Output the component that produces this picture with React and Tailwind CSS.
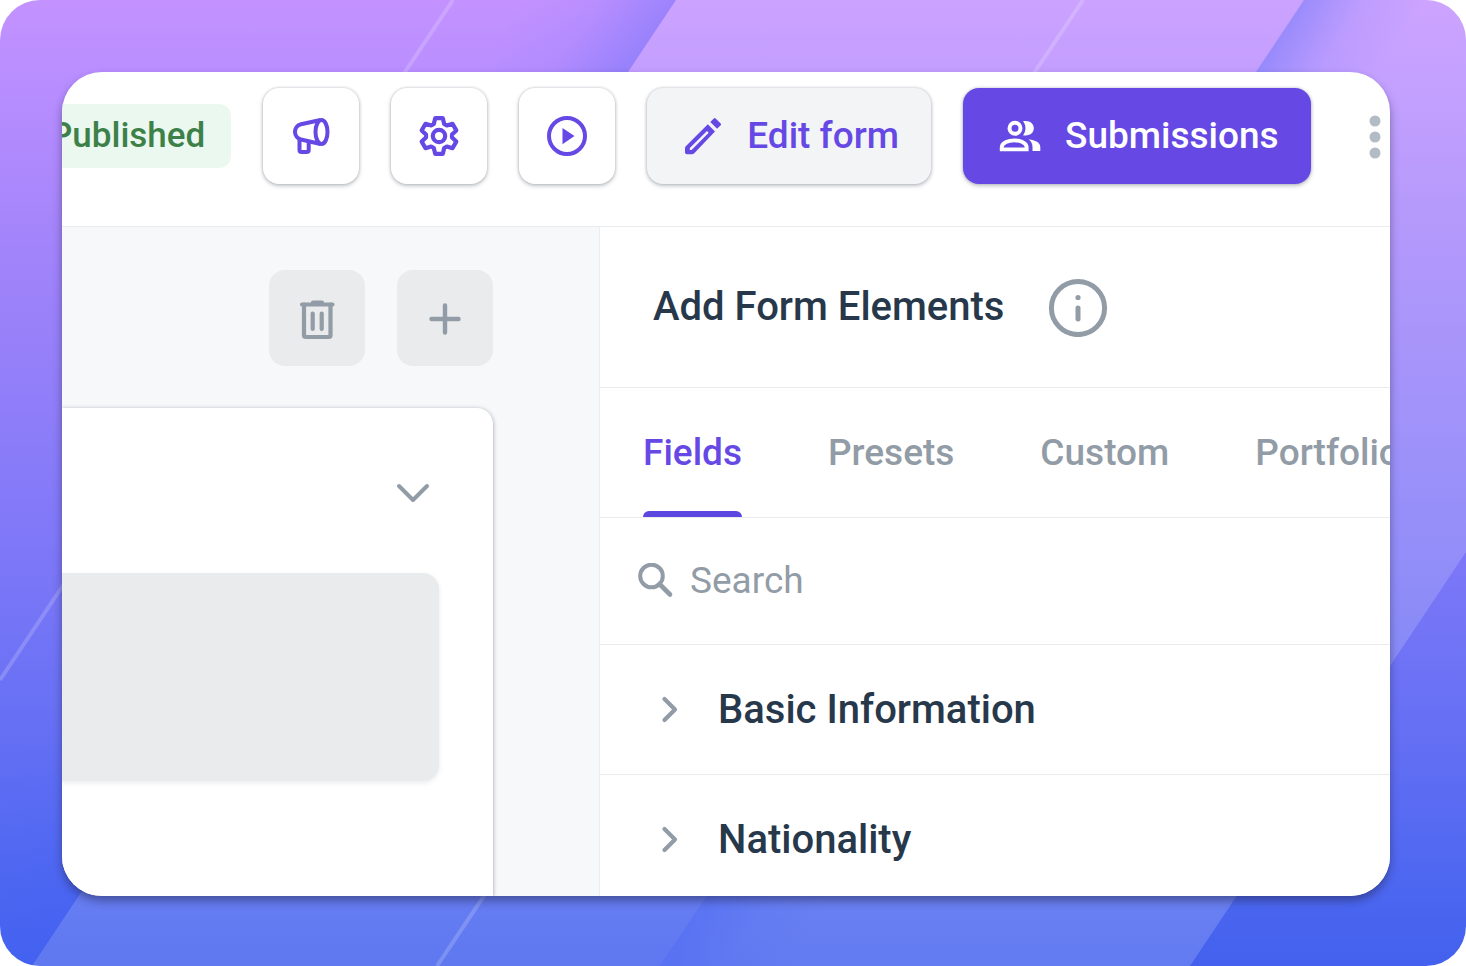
import { useState } from "react";

function Backdrop() {
  return (
    <svg
      className="absolute inset-0 h-full w-full"
      viewBox="0 0 1466 966"
      preserveAspectRatio="none"
      aria-hidden="true"
    >
      <defs>
        <linearGradient id="sky" x1="0" y1="0" x2="0" y2="1">
          <stop offset="0" stopColor="#c392ff" />
          <stop offset="0.08" stopColor="#b98eff" />
          <stop offset="0.25" stopColor="#a384fa" />
          <stop offset="0.56" stopColor="#7f78f8" />
          <stop offset="0.75" stopColor="#6670f4" />
          <stop offset="0.93" stopColor="#4b66f0" />
          <stop offset="1" stopColor="#4361ee" />
        </linearGradient>
        <linearGradient id="shadeLeft" gradientUnits="userSpaceOnUse" x1="570" y1="-71" x2="676" y2="0">
          <stop offset="0" stopColor="#4361f5" stopOpacity="0" />
          <stop offset="0.5" stopColor="#4361f5" stopOpacity="0.08" />
          <stop offset="1" stopColor="#4361f5" stopOpacity="0.3" />
        </linearGradient>
        <linearGradient id="shadeRight" gradientUnits="userSpaceOnUse" x1="1304" y1="0" x2="1390" y2="57">
          <stop offset="0" stopColor="#4361f5" stopOpacity="0.36" />
          <stop offset="0.5" stopColor="#4361f5" stopOpacity="0.1" />
          <stop offset="1" stopColor="#4361f5" stopOpacity="0" />
        </linearGradient>
      </defs>
      <rect width="1466" height="966" fill="url(#sky)" />
      <path d="M516 0H676L32 966H-128Z" fill="url(#shadeLeft)" />
      <path d="M676 0H1304L660 966H32Z" fill="#fff" fillOpacity="0.15" />
      <path d="M1304 0H1834L1190 966H660Z" fill="#fff" fillOpacity="0.17" />
      <path d="M1304 0H1454L810 966H660Z" fill="url(#shadeRight)" />
      <path d="M453 0L0 680M1083 0L437 966" stroke="#fff" strokeOpacity="0.18" strokeWidth="4" />
    </svg>
  );
}

function MegaphoneIcon() {
  return (
    <svg width="40" height="40" viewBox="0 0 40 40" fill="none" stroke="currentColor" strokeWidth="4" strokeLinejoin="round" aria-hidden="true">
      <ellipse cx="30.500" cy="16" rx="6" ry="12" />
      <path d="M29.500 4L10 8.200C6 9 4 12.500 4 16S6.500 22.500 10 23.500L29.500 28" />
      <path d="M8.500 23.500V34C8.500 35.600 9.500 36 10.500 36H15.500C17 36 17.700 35.300 17.700 34.200V26" />
    </svg>
  );
}

function GearIcon() {
  return (
    <svg width="40" height="40" viewBox="-20 -20 40 40" fill="none" stroke="currentColor" strokeWidth="4.200" strokeLinejoin="round" aria-hidden="true">
      <path d="M-5.200 -12L-3.800 -17.800H3.800L5.200 -12L7.800 -10.500L13.500 -12.200L17.300 -5.600L13 -1.500V1.500L17.300 5.600L13.500 12.200L7.800 10.500L5.200 12L3.800 17.800H-3.800L-5.200 12L-7.800 10.500L-13.500 12.200L-17.300 5.600L-13 1.500V-1.500L-17.300 -5.600L-13.500 -12.200L-7.800 -10.500Z" />
      <circle r="6.200" />
    </svg>
  );
}

function PlayIcon() {
  return (
    <svg width="40" height="40" viewBox="0 0 40 40" aria-hidden="true">
      <circle cx="20" cy="20" r="18" fill="none" stroke="currentColor" strokeWidth="4" />
      <path d="M15.500 12L27.500 20L15.500 28.300Z" fill="currentColor" />
    </svg>
  );
}

function PencilIcon() {
  return (
    <svg width="40" height="40" viewBox="0 0 40 40" fill="currentColor" aria-hidden="true">
      <path fillRule="evenodd" d="M24.800 8.300L32 15.500L11 37.500Q10 38.300 9 38.300H4Q2 38.300 2 36.500V32.300Q2 31 3 30ZM24 15L6.800 32V34H8.600L25.700 16.800Z" />
      <path d="M27.300 6L30.800 2.500Q31.700 1.600 32.600 2.500L37.700 7.500Q38.600 8.400 37.700 9.300L34.100 12.800Z" />
    </svg>
  );
}

function PeopleIcon() {
  return (
    <svg width="42" height="32" viewBox="0 0 42 32" fill="currentColor" aria-hidden="true">
      <circle cx="16" cy="8.300" r="5.500" fill="none" stroke="currentColor" strokeWidth="4" />
      <path d="M24 1.300C31 0 34.800 4 34.800 8.300S31 16.500 24 15.300C27.300 11.500 27.300 5.100 24 1.300Z" />
      <path d="M2.700 29.400V27.500C2.700 22.500 10 20.400 15.200 20.400S27.700 22.500 27.700 27.500V29.400Z" fill="none" stroke="currentColor" strokeWidth="3.800" />
      <path d="M29.500 19.200C36.500 20 41.300 22.500 41.300 27V31.100H33.500V27C33.500 23.500 32 21 29.500 19.200Z" />
    </svg>
  );
}

function TrashIcon() {
  return (
    <svg width="40" height="44" viewBox="0 0 40 44" fill="none" stroke="currentColor" strokeWidth="4.200" strokeLinecap="round" strokeLinejoin="round" aria-hidden="true">
      <path d="M5 8.500H35.500M16 6.500H25" />
      <path d="M7 8.500V39.500Q7 41 9 41H31.500Q33.500 41 33.500 39.500V8.500M15.700 17.500V33M24.700 17.500V33" />
    </svg>
  );
}

function PlusIcon() {
  return (
    <svg width="40" height="40" viewBox="0 0 40 40" fill="none" stroke="currentColor" strokeWidth="4.400" strokeLinecap="round" aria-hidden="true">
      <path d="M20 7.500V34.500M6.500 21H33.500" />
    </svg>
  );
}

function InfoIcon() {
  return (
    <svg width="60" height="60" viewBox="0 0 60 60" fill="none" aria-hidden="true">
      <circle cx="30" cy="31" r="26.600" stroke="currentColor" strokeWidth="5" />
      <circle cx="30" cy="20.500" r="2.600" fill="currentColor" />
      <path d="M30 31V42" stroke="currentColor" strokeWidth="5" strokeLinecap="round" />
    </svg>
  );
}

function SearchIcon() {
  return (
    <svg width="36" height="36" viewBox="0 0 36 36" fill="none" stroke="currentColor" strokeWidth="4" aria-hidden="true">
      <circle cx="13.500" cy="13" r="11.300" />
      <path d="M21.500 21L32 31.500" strokeWidth="4.600" strokeLinecap="round" />
    </svg>
  );
}

const tabs = ["Fields", "Presets", "Custom", "Portfolio"];
const groups = ["Basic Information", "Nationality"];

const raised = "shadow-[0_2px_4px_rgba(60,70,85,0.28),0_0_3px_rgba(60,70,85,0.3)]";
const iconButton = `flex size-24 shrink-0 items-center justify-center rounded-2xl bg-white text-[#6649e5] ${raised}`;
const grayButton = "flex size-24 items-center justify-center rounded-2xl bg-[#e9ebec] text-[#929ca6]";

function Header() {
  return (
    <header className="flex items-center gap-8 border-b border-[#e9ebed] pt-4 pb-[42px] whitespace-nowrap">
      <span className="-ml-11 shrink-0 rounded-xl bg-[#ebf8ef] py-2 pr-[26px] pl-8 text-[35px] leading-12 font-medium text-[#3d8149]">
        Published
      </span>
      <button className={iconButton} aria-label="Announce">
        <MegaphoneIcon />
      </button>
      <button className={iconButton} aria-label="Settings">
        <GearIcon />
      </button>
      <button className={iconButton} aria-label="Preview">
        <PlayIcon />
      </button>
      <button
        className={`flex h-24 shrink-0 items-center gap-6 rounded-2xl bg-[#f3f4f6] pr-8 pl-9 text-[37px] font-medium text-[#6649e5] ${raised}`}
      >
        <PencilIcon />
        Edit form
      </button>
      <button
        className={`flex h-24 shrink-0 items-center gap-6 rounded-2xl bg-[#6649e5] pr-8 pl-9 text-[37px] font-medium text-white ${raised}`}
      >
        <PeopleIcon />
        Submissions
      </button>
      <button className="ml-auto shrink-0 pr-2 text-[#b3bbc4]" aria-label="More">
        <svg width="14" height="46" viewBox="0 0 14 46" fill="currentColor" aria-hidden="true">
          <circle cx="7" cy="8" r="5.500" />
          <circle cx="7" cy="24" r="5.500" />
          <circle cx="7" cy="40" r="5.500" />
        </svg>
      </button>
    </header>
  );
}

function Canvas() {
  return (
    <main className="flex min-w-0 flex-1 flex-col bg-[#f7f8fa] pt-[43px] pr-[106px]">
      <div className="flex justify-end gap-8">
        <button className={grayButton} aria-label="Delete">
          <TrashIcon />
        </button>
        <button className={grayButton} aria-label="Add">
          <PlusIcon />
        </button>
      </div>
      <section className="mt-[42px] flex-1 rounded-tr-2xl bg-white pr-[54px] shadow-[0_1px_4px_rgba(60,70,85,0.5)]">
        <div className="flex h-[165px] items-center justify-end pt-1 pr-2">
          <button className="text-[#929ca6]" aria-label="Collapse">
            <svg width="36" height="24" viewBox="0 0 36 24" fill="none" stroke="currentColor" strokeWidth="4" strokeLinecap="round" strokeLinejoin="round" aria-hidden="true">
              <path d="M4 5L18 19L32 5" />
            </svg>
          </button>
        </div>
        <div className="h-52 rounded-r-2xl bg-[#e9ebec] shadow-[0_2px_5px_rgba(60,70,85,0.1)]" />
      </section>
    </main>
  );
}

function ElementsPanel() {
  const [active, setActive] = useState("Fields");
  const [query, setQuery] = useState("");

  return (
    <aside className="w-[791px] shrink-0 border-l border-[#ebedef] bg-white">
      <div className="flex h-[161px] items-center gap-11 border-b border-[#e9ebed] pl-[53px]">
        <h2 className="text-[40px] font-medium text-[#27384b]">Add Form Elements</h2>
        <button className="text-[#929ca6]" aria-label="Help">
          <InfoIcon />
        </button>
      </div>
      <nav className="flex h-[130px] gap-[86px] overflow-hidden border-b border-[#e9ebed] pl-[43px] whitespace-nowrap">
        {tabs.map((tab) => (
          <button
            key={tab}
            onClick={() => setActive(tab)}
            className={`relative text-[37px] font-medium ${active === tab ? "text-[#6649e5]" : "text-[#929ca6]"}`}
          >
            {tab}
            {active === tab && <span className="absolute inset-x-0 bottom-0 h-1.5 rounded-t-md bg-[#5b46e0]" />}
          </button>
        ))}
      </nav>
      <label className="flex h-[127px] items-center gap-4 border-b border-[#e9ebed] pl-[38px] text-[#929ca6]">
        <SearchIcon />
        <input
          value={query}
          onChange={(e) => setQuery(e.target.value)}
          placeholder="Search"
          aria-label="Search"
          className="min-w-0 flex-1 text-[37px] outline-none placeholder:text-[#929ca6]"
        />
      </label>
      {groups.map((group) => (
        <button
          key={group}
          className="flex h-[130px] w-full items-center gap-9 border-b border-[#e9ebed] pl-[58px] text-[40px] font-medium text-[#27384b]"
        >
          <svg width="24" height="30" viewBox="0 0 24 30" fill="none" stroke="#929ca6" strokeWidth="4.200" strokeLinecap="round" strokeLinejoin="round" aria-hidden="true">
            <path d="M6.500 4L17 14.500L6.500 25" />
          </svg>
          {group}
        </button>
      ))}
    </aside>
  );
}

export default function App() {
  return (
    <div className="bg-white font-[Roboto,sans-serif]">
      <div className="relative flex h-screen overflow-hidden rounded-[40px] pt-[72px] pr-[76px] pb-[70px] pl-[62px]">
        <Backdrop />
        <div className="relative flex min-w-0 flex-1 rounded-[40px] shadow-[0_5px_9px_rgba(30,30,60,0.45)]">
          <div className="flex min-w-0 flex-1 flex-col overflow-hidden rounded-[40px] bg-white">
            <Header />
            <div className="flex min-h-0 flex-1">
              <Canvas />
              <ElementsPanel />
            </div>
          </div>
        </div>
      </div>
    </div>
  );
}
